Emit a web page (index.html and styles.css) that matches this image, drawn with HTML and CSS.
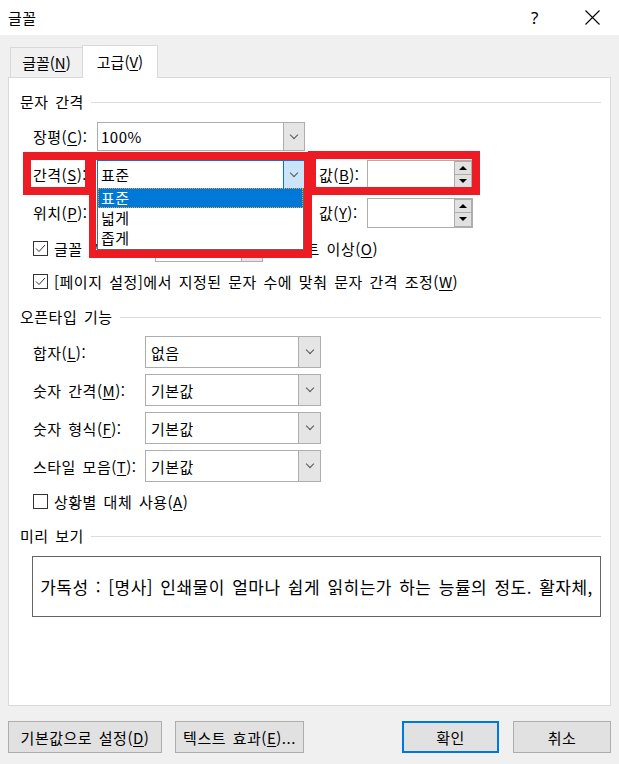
FILE: index.html
```html
<!DOCTYPE html>
<html lang="ko">
<head>
    <meta charset="UTF-8">
    <title>글꼴</title>
    <link rel="stylesheet" href="styles.css">
</head>
<body>
<div class="dialog">
    <div class="titlebar">
        <span class="title">글꼴</span>
        <span class="help">?</span>
        <span class="close">
            <svg width="15" height="15" viewBox="0 0 15 15"><path d="M0.5 0.5 L14.5 14.5 M14.5 0.5 L0.5 14.5" stroke="#000" stroke-width="1.1" fill="none"/></svg>
        </span>
    </div>

    <div class="content">
        <div class="tabs">
            <div class="tab">글꼴(<u>N</u>)</div>
            <div class="tab active">고급(<u>V</u>)</div>
        </div>

        <div class="panel">
            <div class="section-title first"><span>문자 간격</span></div>

            <div class="row spacing-row">
                <span class="label">장평(<u>C</u>):</span>
                <div class="combo wide">
                    <span class="value">100%</span>
                    <span class="arrow"><i class="chev"></i></span>
                </div>
            </div>

            <div class="row spacing-row">
                <span class="label">간격(<u>S</u>):</span>
                <div class="combo wide open">
                    <span class="value">표준</span>
                    <span class="arrow"><i class="chev"></i></span>
                </div>
                <span class="label2">값(<u>B</u>):</span>
                <div class="spin">
                    <div class="spin-btns">
                        <span class="sbtn"><i class="tri-up"></i></span>
                        <span class="sbtn"><i class="tri-down"></i></span>
                    </div>
                </div>
            </div>

            <div class="row spacing-row">
                <span class="label">위치(<u>P</u>):</span>
                <div class="combo wide">
                    <span class="value"></span>
                    <span class="arrow"><i class="chev"></i></span>
                </div>
                <span class="label2">값(<u>Y</u>):</span>
                <div class="spin">
                    <div class="spin-btns">
                        <span class="sbtn"><i class="tri-up"></i></span>
                        <span class="sbtn"><i class="tri-down"></i></span>
                    </div>
                </div>
            </div>

            <div class="row check-row kerning">
                <span class="checkbox checked">
                    <svg width="15" height="15" viewBox="0 0 15 15"><path d="M3 7.5 L6 10.5 L12 4" stroke="#333" stroke-width="1" fill="none"/></svg>
                </span>
                <span class="check-text kern-label">글꼴 커닝(<u>K</u>):</span>
                <div class="combo small">
                    <span class="value"></span>
                    <span class="arrow"><i class="chev"></i></span>
                </div>
                <span class="check-text after">포인트 이상(<u>O</u>)</span>
            </div>

            <div class="row check-row grid-fit">
                <span class="checkbox checked">
                    <svg width="15" height="15" viewBox="0 0 15 15"><path d="M3 7.5 L6 10.5 L12 4" stroke="#333" stroke-width="1" fill="none"/></svg>
                </span>
                <span class="check-text">[페이지 설정]에서 지정된 문자 수에 맞춰 문자 간격 조정(<u>W</u>)</span>
            </div>

            <div class="section-title second"><span>오픈타입 기능</span></div>

            <div class="opentype">
                <div class="row ot-row">
                    <span class="ot-label">합자(<u>L</u>):</span>
                    <div class="combo ot">
                        <span class="value">없음</span>
                        <span class="arrow"><i class="chev"></i></span>
                    </div>
                </div>
                <div class="row ot-row">
                    <span class="ot-label">숫자 간격(<u>M</u>):</span>
                    <div class="combo ot">
                        <span class="value">기본값</span>
                        <span class="arrow"><i class="chev"></i></span>
                    </div>
                </div>
                <div class="row ot-row">
                    <span class="ot-label">숫자 형식(<u>F</u>):</span>
                    <div class="combo ot">
                        <span class="value">기본값</span>
                        <span class="arrow"><i class="chev"></i></span>
                    </div>
                </div>
                <div class="row ot-row">
                    <span class="ot-label">스타일 모음(<u>T</u>):</span>
                    <div class="combo ot">
                        <span class="value">기본값</span>
                        <span class="arrow"><i class="chev"></i></span>
                    </div>
                </div>
            </div>

            <div class="row check-row alt">
                <span class="checkbox"></span>
                <span class="check-text">상황별 대체 사용(<u>A</u>)</span>
            </div>

            <div class="section-title third"><span>미리 보기</span></div>

            <div class="preview">가독성 : [명사] 인쇄물이 얼마나 쉽게 읽히는가 하는 능률의 정도. 활자체,</div>

            <!-- open dropdown and the red highlight frames drawn over the form -->
            <div class="dropdown">
                <div class="item selected">표준</div>
                <div class="item">넓게</div>
                <div class="item">좁게</div>
            </div>
            <div class="mark mark-label"></div>
            <div class="mark mark-combo"></div>
            <div class="mark mark-value"></div>
        </div>

        <div class="footer">
            <button class="btn btn-default">기본값으로 설정(<u>D</u>)</button>
            <button class="btn btn-effects">텍스트 효과(<u>E</u>)...</button>
            <button class="btn btn-ok">확인</button>
            <button class="btn btn-cancel">취소</button>
        </div>
    </div>
</div>
</body>
</html>
```

FILE: styles.css
```css
body {
    margin: 0;
    font-family: "Noto Sans CJK KR", "Noto Sans", sans-serif;
    font-size: 15px;
    letter-spacing: 0.5px;
    word-spacing: 2px;
    color: #000;
    background: #f0f0f0;
}

u {
    text-decoration-thickness: 1px;
    text-underline-offset: 2px;
}

.dialog {
    width: 619px;
    height: 764px;
    background: #f0f0f0;
    overflow: hidden;
}

/* title bar */
.titlebar {
    display: flex;
    align-items: center;
    height: 35px;
    background: #fff;
    padding-right: 4px;
}

.titlebar .title {
    flex: 1;
    padding-left: 8px;
    line-height: 20px;
}

.titlebar .help {
    width: 30px;
    text-align: center;
    font-family: "Noto Sans", sans-serif;
    font-size: 17px;
    line-height: 20px;
}

.titlebar .close {
    width: 46px;
    margin-left: 19px;
    display: flex;
    justify-content: center;
}

/* tabs + panel */
.content {
    padding: 10px 8px 0 8px;
}

.tabs {
    display: flex;
    align-items: flex-end;
    height: 32px;
    padding-left: 2px;
    position: relative;
    z-index: 2;
}

.tab {
    box-sizing: border-box;
    height: 30px;
    width: 72px;
    border: 1px solid #d9d9d9;
    border-bottom: none;
    border-right: none;
    text-align: center;
    line-height: 30px;
    background: #f0f0f0;
    letter-spacing: 0;
}

.tab.active {
    width: 76px;
    height: 33px;
    margin-bottom: -1px;
    border-right: 1px solid #d9d9d9;
    background: #fff;
    line-height: 32px;
}

.panel {
    position: relative;
    box-sizing: border-box;
    width: 603px;
    height: 629px;
    background: #fff;
    border: 1px solid #d9d9d9;
    padding: 0 9px 0 11px;
}

.section-title {
    display: flex;
    align-items: center;
    height: 20px;
    line-height: 20px;
}

.section-title::after {
    content: "";
    flex: 1;
    height: 1px;
    background: #dcdcdc;
    margin-left: 7px;
}

.section-title.first { margin-top: 14px; }
.section-title.second { margin-top: 16px; }
.section-title.third { margin-top: 15px; }

.row {
    display: flex;
    align-items: center;
    padding-left: 13px;
}

/* 문자 간격 */
.spacing-row {
    height: 29px;
    margin-top: 9px;
}

.section-title.first + .spacing-row {
    margin-top: 10px;
}

.label {
    width: 64px;
    white-space: nowrap;
}

.label2 {
    width: 48px;
    margin-left: 14px;
    white-space: nowrap;
}

.combo {
    box-sizing: border-box;
    display: flex;
    height: 100%;
    background: #fff;
    border: 1px solid #adadad;
}

.combo .value {
    flex: 1;
    padding-left: 3px;
    display: flex;
    align-items: center;
}

.combo .arrow {
    width: 20px;
    display: flex;
    align-items: center;
    justify-content: center;
    background: #e5e5e5;
    border-left: 1px solid #adadad;
}

.combo.wide { width: 208px; }

.combo.open {
    border-color: #0078d7;
}

.combo.open .arrow {
    background: #cce4f7;
    border-left-color: #0078d7;
}

.chev {
    display: block;
    width: 5px;
    height: 5px;
    border-right: 1px solid #555;
    border-bottom: 1px solid #555;
    transform: translateY(-2px) rotate(45deg);
}

.spin {
    box-sizing: border-box;
    width: 106px;
    height: 30px;
    border: 1px solid #adadad;
    background: #fff;
    display: flex;
    justify-content: flex-end;
}

.spin-btns {
    width: 18px;
    display: flex;
    flex-direction: column;
}

.sbtn {
    flex: 1;
    background: #e1e1e1;
    border: 1px solid #adadad;
    display: flex;
    align-items: center;
    justify-content: center;
}

.sbtn + .sbtn { border-top: none; }

.tri-up,
.tri-down {
    width: 0;
    height: 0;
    border-left: 4px solid transparent;
    border-right: 4px solid transparent;
}

.tri-up { border-bottom: 4px solid #000; }
.tri-down { border-top: 4px solid #000; }

/* checkbox rows */
.check-row {
    height: 20px;
}

.check-row.kerning {
    height: 28px;
    margin-top: 7px;
}

.check-row.grid-fit { margin-top: 9px; }
.check-row.alt { margin-top: 9px; }

.checkbox {
    box-sizing: border-box;
    flex: none;
    width: 15px;
    height: 15px;
    border: 1px solid #333;
    background: #fff;
    display: flex;
    align-items: center;
    justify-content: center;
}

.checkbox svg {
    flex: none;
    margin: -1px;
}

.check-text {
    margin-left: 6px;
    white-space: nowrap;
}

.check-text.kern-label {
    width: 101px;
}

.combo.small {
    width: 108px;
    height: 26px;
    margin-top: 2px;
}

.check-text.after {
    margin-left: 14px;
}

/* 오픈타입 기능 */
.opentype {
    margin-top: 9px;
}

.ot-row {
    height: 32px;
    margin-bottom: 6px;
}

.ot-row:last-child { margin-bottom: 0; }

.ot-label {
    width: 112px;
    white-space: nowrap;
}

.combo.ot {
    width: 176px;
}

.combo.ot .value {
    padding-left: 5px;
}

.combo.ot .arrow {
    width: 21px;
}

/* 미리 보기 */
.preview {
    box-sizing: border-box;
    height: 61px;
    margin: 10px 0 0 12px;
    border: 1px solid #646464;
    font-size: 17px;
    line-height: 59px;
    white-space: nowrap;
    overflow: hidden;
    text-align: center;
}

/* open list of the 간격 combo */
.dropdown {
    position: absolute;
    left: 88px;
    top: 110px;
    box-sizing: border-box;
    width: 207px;
    height: 62px;
    background: #fff;
    border: 1px solid #646464;
    border-top: none;
    z-index: 3;
}

.item {
    height: 20px;
    line-height: 20px;
    padding-left: 3px;
}

.item.selected {
    box-sizing: border-box;
    line-height: 18px;
    background: #0078d7;
    color: #fff;
    border: 1px dotted #f0a040;
    padding-left: 2px;
}

/* red highlight frames */
.mark {
    position: absolute;
    box-sizing: border-box;
    border: 8px solid #ed1c24;
    z-index: 4;
}

.mark-label {
    left: 14px;
    top: 74px;
    width: 70px;
    height: 43px;
}

.mark-combo {
    left: 80px;
    top: 74px;
    width: 223px;
    height: 106px;
    border-left-width: 7px;
}

.mark-value {
    left: 299px;
    top: 73px;
    width: 172px;
    height: 44px;
}

/* bottom buttons */
.footer {
    display: flex;
    margin-top: 15px;
}

.btn {
    box-sizing: border-box;
    height: 32px;
    padding: 0;
    font-family: inherit;
    font-size: 15px;
    letter-spacing: 0.5px;
    word-spacing: 2px;
    color: #000;
    background: #e1e1e1;
    border: 1px solid #adadad;
}

.btn-default { width: 154px; }
.btn-effects { width: 129px; margin-left: 13px; }

.btn-ok {
    width: 97px;
    margin-left: auto;
    border: 2px solid #0078d7;
}

.btn-cancel { width: 98px; margin-left: 14px; }
```
